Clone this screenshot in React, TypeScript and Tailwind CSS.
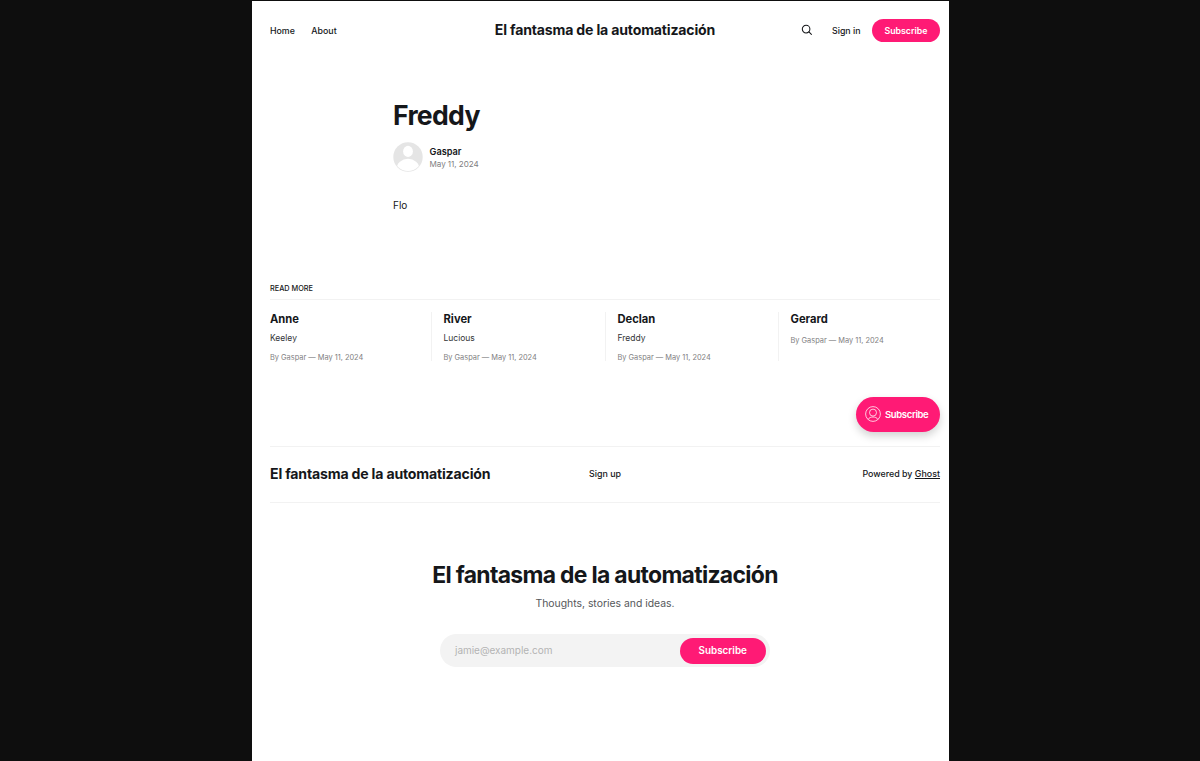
import React from 'react';

const SITE = 'El fantasma de la automatización';

type Post = { title: string; excerpt?: string };

const posts: Post[] = [
  { title: 'Anne', excerpt: 'Keeley' },
  { title: 'River', excerpt: 'Lucious' },
  { title: 'Declan', excerpt: 'Freddy' },
  { title: 'Gerard' },
];

function SearchIcon() {
  return (
    <svg width="12" height="12" viewBox="0 0 12 12" fill="none" stroke="#15171a" strokeWidth="1.05" strokeLinecap="round">
      <circle cx="5.1" cy="5.1" r="3.8" />
      <path d="M7.9 7.9 10.4 10.4" />
    </svg>
  );
}

function Avatar() {
  return (
    <svg width="30" height="30" viewBox="0 0 30 30">
      <defs>
        <clipPath id="avatar-clip">
          <circle cx="15" cy="15" r="14" />
        </clipPath>
      </defs>
      <circle cx="15" cy="15" r="14.7" fill="#e5e5e5" />
      <g fill="#fff" clipPath="url(#avatar-clip)">
        <ellipse cx="15" cy="9.4" rx="4.9" ry="5.6" />
        <ellipse cx="15" cy="27.2" rx="11.4" ry="10.4" />
      </g>
    </svg>
  );
}

function MemberIcon() {
  return (
    <svg className="mb-px shrink-0" width="16" height="16" viewBox="0 0 16 16" fill="none" stroke="#fff" strokeWidth="0.75">
      <circle cx="8" cy="8" r="7.4" />
      <circle cx="8" cy="6.6" r="3.5" />
      <path d="M3 13.3C4.2 11.7 6 11 8 11s3.8.7 5 2.3" />
    </svg>
  );
}

function Header() {
  return (
    <header className="grid h-[58px] grid-cols-[1fr_auto_1fr] items-center">
      <nav className="flex gap-[16.5px] pt-px text-[8.8px] font-medium">
        <a>Home</a>
        <a>About</a>
      </nav>
      <a className="text-[14.1px] font-bold tracking-[-0.18px]">{SITE}</a>
      <div className="flex items-center justify-end pt-px text-[8.8px] font-medium">
        <span className="mr-[19px] -mt-px">
          <SearchIcon />
        </span>
        <a className="mr-[11.5px]">Sign in</a>
        <a className="flex h-[23px] w-[68px] items-center justify-center rounded-full bg-[#ff1a75] font-semibold text-white">
          Subscribe
        </a>
      </div>
    </header>
  );
}

function Article() {
  return (
    <article className="h-[220px] pl-[123px] pt-[38px]">
      <h1 className="h-9 text-[26.6px] leading-9 font-bold tracking-[-0.7px]">Freddy</h1>
      <div className="mt-[9px] flex h-[30px] items-center gap-[6.5px]">
        <Avatar />
        <div className="pt-[2px]">
          <div className="h-3 text-[9.2px] leading-3 font-semibold">Gaspar</div>
          <div className="h-[13px] text-[8.1px] leading-[13px] tracking-[-0.05px] text-[#7f8082]">May 11, 2024</div>
        </div>
      </div>
      <p className="mt-[25px] text-[10px] leading-4">Flo</p>
    </article>
  );
}

function ReadMore() {
  return (
    <section className="h-[167px]">
      <h2 className="flex h-[21px] items-center border-b border-[#f2f2f2] pt-px text-[7.3px] font-medium">READ MORE</h2>
      <div className="mt-3 grid h-[49px] grid-cols-[161px_174px_173px_1fr]">
        {posts.map((post, i) => (
          <div key={post.title} className={i === 0 ? '' : 'border-l border-[#f2f2f2] pl-[11.5px]'}>
            <h3 className="text-[11.2px] leading-[15px] font-bold">{post.title}</h3>
            {post.excerpt && <p className="mt-[5px] text-[8.5px] leading-3 text-[#333537]">{post.excerpt}</p>}
            <p className={post.excerpt ? 'mt-[8px] h-[9px] text-[7.4px] leading-3 text-[#7f8082]' : 'mt-[8px] text-[7.4px] leading-3 text-[#7f8082]'}>
              By Gaspar — May 11, 2024
            </p>
          </div>
        ))}
      </div>
    </section>
  );
}

function FooterBar() {
  return (
    <div className="grid h-[57px] grid-cols-[1fr_32px_1fr] items-center border-y border-[#f2f2f2] pb-px">
      <span className="text-[14.1px] font-bold tracking-[-0.18px]">{SITE}</span>
      <a className="text-[8.9px] font-medium whitespace-nowrap">Sign up</a>
      <span className="text-right text-[8.9px] font-medium">
        Powered by <a className="underline">Ghost</a>
      </span>
    </div>
  );
}

function Signup() {
  return (
    <section className="flex flex-col items-center pt-[56px]">
      <h2 className="h-8 text-[22.9px] leading-8 font-bold tracking-[-0.68px] whitespace-nowrap">{SITE}</h2>
      <p className="mt-[5px] text-[10.4px] leading-4 text-[#55575a]">Thoughts, stories and ideas.</p>
      <form className="mt-[22px] flex h-[33px] w-[330px] items-center justify-between rounded-full bg-[#f3f3f3] pr-1 pl-[15px]">
        <span className="text-[10px] tracking-[-0.03px] text-[#b3b3b3]">jamie@example.com</span>
        <button type="button" className="h-[26px] w-[86.5px] rounded-full bg-[#ff1a75] text-[9.9px] font-semibold text-white">
          Subscribe
        </button>
      </form>
    </section>
  );
}

export default function App() {
  return (
    <div className="flex h-[761px] justify-center overflow-hidden bg-[#0e0e0e] pt-px font-['Inter',sans-serif] text-[#15171a]">
      <main className="relative mr-px ml-[2px] h-[760px] w-[697px] bg-white pr-[9px] pl-[18px]">
        <Header />
        <Article />
        <ReadMore />
        <FooterBar />
        <Signup />
        <button
          type="button"
          className="absolute top-[395.5px] right-[9px] flex h-[35.5px] w-[84px] items-center gap-[4px] rounded-full bg-[#ff1a75] pl-[9px] text-[9.5px] font-semibold tracking-[-0.36px] text-white shadow-[0_4px_8px_rgba(0,0,0,0.18)]"
        >
          <MemberIcon />
          <span className="pt-px">Subscribe</span>
        </button>
      </main>
    </div>
  );
}
